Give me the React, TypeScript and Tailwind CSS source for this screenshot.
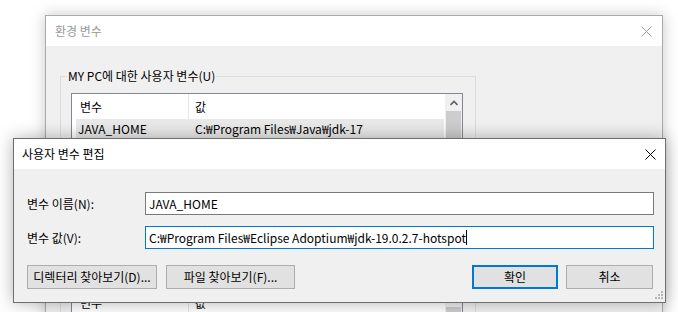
import React from 'react';

// Windows 10 "환경 변수" window with the "사용자 변수 편집" dialog on top

const CloseIcon = ({ color }: { color: string }) => (
  <svg width="11" height="11" viewBox="0 0 11 11" className="block">
    <path d="M0.5 0.5L10.5 10.5M10.5 0.5L0.5 10.5" stroke={color} strokeWidth="1" fill="none" />
  </svg>
);

const ResizeGrip = () => (
  <svg width="9" height="9" viewBox="0 0 9 9" className="block">
    {[
      [7, 1],
      [4, 4], [7, 4],
      [1, 7], [4, 7], [7, 7],
    ].map(([x, y], i) => (
      <rect key={i} x={x} y={y} width="2" height="2" fill="#b8b8b8" />
    ))}
  </svg>
);

const ListBox = ({ rows, height }: { rows: string[][]; height: string }) => (
  <div className={`flex w-[392px] border border-[#828790] bg-white ${height}`}>
    <div className="flex-1 flex flex-col mr-[1px]">
      <div className="flex h-[25px] items-center">
        <div className="w-[117px] h-full flex items-center pl-[8px] border-r border-[#e5e5e5]">변수</div>
        <div className="pl-[6px]">값</div>
      </div>
      {rows.map((row) => (
        <div key={row[0]} className="pl-[4px]">
          <div className="flex h-[20px] items-center bg-[#e9e9e9]">
            <div className="w-[112px] pl-[2px]">{row[0]}</div>
            <div className="pl-[7px]">{row[1]}</div>
          </div>
        </div>
      ))}
    </div>
    <div className="w-[17px] bg-[#f0f0f0] flex flex-col">
      <div className="h-[17px] flex items-center justify-center">
        <svg width="8" height="6" viewBox="0 0 8 6" className="block">
          <path d="M0.5 5L4 1.5L7.5 5" stroke="#606060" strokeWidth="1.6" fill="none" />
        </svg>
      </div>
      <div className="mx-[1px] h-[60px] bg-[#cdcdcd]" />
    </div>
  </div>
);

const GroupBox = ({ label, children, className }: { label?: string; children: React.ReactNode; className?: string }) => (
  <div className={`relative w-[416px] border border-[#dcdcdc] pt-[16px] pl-[10px] pr-[11px] pb-[10px] ${className ?? ''}`}>
    {label && <span className="absolute -top-[9px] left-[6px] bg-[#f0f0f0] px-[1px] leading-[16px]">{label}</span>}
    {children}
  </div>
);

const Button = ({ label, width, isDefault }: { label: string; width: string; isDefault?: boolean }) => (
  <div
    className={`${width} h-[24px] flex items-center justify-center bg-[#e1e1e1] ${
      isDefault ? 'border-2 border-[#0078d7]' : 'border border-[#adadad]'
    }`}
  >
    {label}
  </div>
);

export default function App() {
  return (
    <div className="relative w-[678px] h-[312px] overflow-hidden bg-white text-[12px] text-black font-['Noto_Sans_CJK_KR',sans-serif]">
      {/* back window (inactive) */}
      <div className="absolute left-[45px] top-[15px] w-[618px] h-[340px] border border-[#aaaaaa] bg-[#f0f0f0] shadow-[0_0_14px_rgba(0,0,0,0.22)]">
        <div className="h-[30px] bg-white flex items-center justify-between pl-[9px] pr-[10px]">
          <span className="text-[#9a9a9a]">환경 변수</span>
          <CloseIcon color="#9a9a9a" />
        </div>
        <div className="pt-[30px] pl-[14px]">
          <GroupBox label="MY PC에 대한 사용자 변수(U)">
            <ListBox rows={[['JAVA_HOME', 'C:₩Program Files₩Java₩jdk-17']]} height="h-[160px]" />
          </GroupBox>
          {/* system variables group, mostly hidden under the dialog */}
          <GroupBox className="mt-[8px]">
            <ListBox rows={[]} height="h-[120px]" />
          </GroupBox>
        </div>
      </div>

      {/* edit dialog (active) */}
      <div className="absolute left-[13px] top-[138px] w-[653px] h-[165px] border border-[#6e6e6e] bg-[#f0f0f0] shadow-[0_0_16px_rgba(0,0,0,0.3)]">
        <div className="h-[30px] bg-white flex items-center justify-between pl-[8px] pr-[9px]">
          <span>사용자 변수 편집</span>
          <CloseIcon color="#000000" />
        </div>
        <div className="pt-[23px] pl-[13px] pr-[11px]">
          <div className="flex items-center">
            <div className="w-[118px]">변수 이름(N):</div>
            <div className="flex-1 h-[23px] border border-[#7a7a7a] bg-white flex items-center pl-[3px]">JAVA_HOME</div>
          </div>
          <div className="flex items-center mt-[11px]">
            <div className="w-[118px]">변수 값(V):</div>
            <div className="flex-1 h-[23px] border border-[#0078d7] bg-white flex items-center pl-[3px]">
              <span>C:₩Program Files₩Eclipse Adoptium₩jdk-19.0.2.7-hotspot</span>
              <span className="w-[1px] h-[15px] bg-black" />
            </div>
          </div>
          <div className="flex mt-[16px]">
            <div className="flex gap-[9px]">
              <Button label="디렉터리 찾아보기(D)..." width="w-[130px]" />
              <Button label="파일 찾아보기(F)..." width="w-[129px]" />
            </div>
            <div className="flex gap-[8px] ml-auto mr-[1px]">
              <Button label="확인" width="w-[86px]" isDefault />
              <Button label="취소" width="w-[87px]" />
            </div>
          </div>
        </div>
        <div className="absolute right-[2px] bottom-[3px]">
          <ResizeGrip />
        </div>
      </div>
    </div>
  );
}
